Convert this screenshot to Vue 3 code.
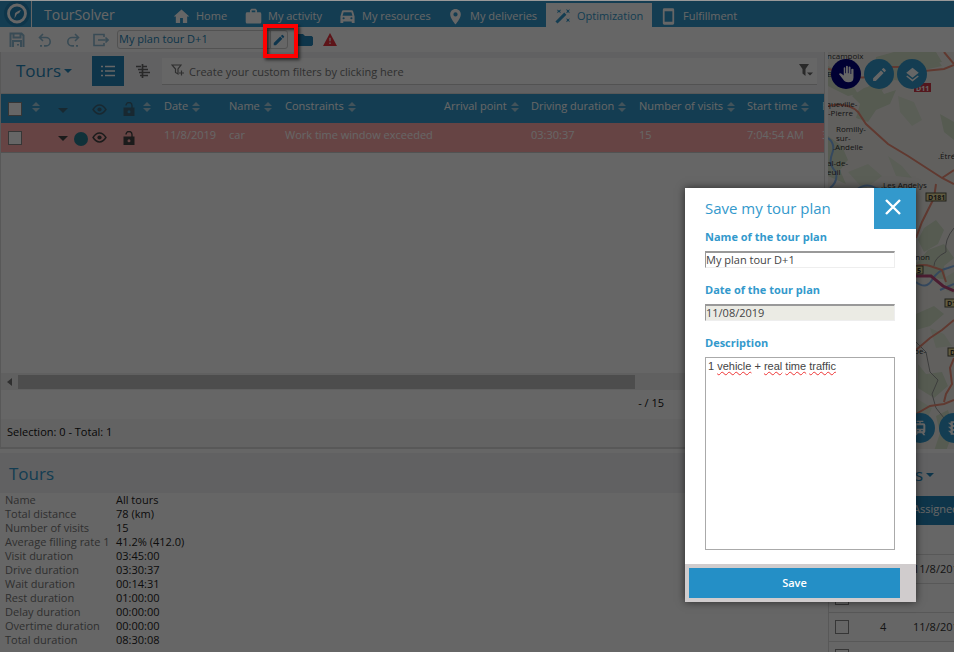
<script setup>
import { ref } from 'vue'

const planName = ref('My plan tour D+1')
const planDate = ref('11/08/2019')
const description = ref('1 vehicle + real time traffic')
const words = [
  { t: '1 ', bad: false },
  { t: 'vehicle', bad: true },
  { t: ' + ', bad: false },
  { t: 'real', bad: true },
  { t: ' ', bad: false },
  { t: 'time', bad: true },
  { t: ' ', bad: false },
  { t: 'traffic', bad: true },
]

const columns = ['Date', 'Name', 'Constraints', 'Arrival point', 'Driving duration', 'Number of visits', 'Start time', 'End time']
const cells = ['11/8/2019', 'car', 'Work time window exceeded', '', '03:30:37', '15', '7:04:54 AM', '3:35:02 PM']

const summary = [
  ['Name', 'All tours'],
  ['Total distance', '78 (km)'],
  ['Number of visits', '15'],
  ['Average filling rate 1', '41.2% (412.0)'],
  ['Visit duration', '03:45:00'],
  ['Drive duration', '03:30:37'],
  ['Wait duration', '00:14:31'],
  ['Rest duration', '01:00:00'],
  ['Delay duration', '00:00:00'],
  ['Overtime duration', '00:00:00'],
  ['Total duration', '08:30:08'],
]

const visits = [
  ['', ''],
  ['2', '11/8/2019'],
  ['', ''],
  ['4', '11/8/2019'],
  ['', ''],
]
</script>

<template>
  <div class="app">
    <header class="topbar">
      <a class="logo" href="#" aria-label="TourSolver home">
        <svg viewBox="0 0 28 26" width="28" height="26">
          <circle cx="14" cy="12.500" r="13" fill="#2585b8" />
          <circle cx="14" cy="12.500" r="8.500" fill="none" stroke="#fff" stroke-width="2.800" />
          <path d="M11.500 17.500 L12 12.500 Q13 10.500 18 9 Q17 12 14 13 Z" fill="#fff" />
        </svg>
      </a>
      <span class="brand">TourSolver</span>
      <nav class="nav">
        <a href="#" class="home"><svg viewBox="0 0 24 24" width="17" height="17"><path d="M10 21v-7h4v7h6v-9h3L12 2 1 12h3v9z" /></svg>Home</a>
        <a href="#" class="activity"><svg viewBox="0 0 24 24" width="17" height="17"><path fill-rule="evenodd" d="M22 6h-5V3l-2-2H9L7 3v3H2L1 8v12l1 2h20l1-2V8zM9.500 3.500h5V6h-5z" /></svg>My activity</a>
        <a href="#" class="resources"><svg viewBox="0 0 24 24" width="17" height="17"><path fill-rule="evenodd" d="M20 5q-.5-2-2-2H6Q4.500 3 4 5l-2 7v9h4v-2h12v2h4v-9zM6.500 16a1.500 1.500 0 1 1 0-3 1.500 1.500 0 0 1 0 3zm11 0a1.500 1.500 0 1 1 0-3 1.500 1.500 0 0 1 0 3zM5 11l1.500-5h11L19 11z" /></svg>My resources</a>
        <a href="#" class="deliveries"><svg viewBox="0 0 24 24" width="17" height="17"><path fill-rule="evenodd" d="M12 1.500C7.500 1.500 4.500 5 4.500 9c0 5.500 7.500 14 7.500 14s7.500-8.500 7.500-14c0-4-3-7.500-7.500-7.500zm0 10.500a3 3 0 1 1 0-6 3 3 0 0 1 0 6z" /></svg>My deliveries</a>
        <a href="#" class="active"><svg viewBox="0 0 24 24" width="17" height="17"><path d="M14.500 6.500l3 3L5 22l-3-3zM7 5.500L4 7.500l1.500-3L4 2l3 1.500L10 2 8.500 4.800 10 7.500zM20 16l2.500-1.500L21 17l1.500 3L20 18.500 17 20l1.500-3L17 14.500zM22.500 1.500L21 4.500l1.500 3-2.500-1.500-3 1.500 1.500-3-1.500-3L20 3z" /></svg>Optimization</a>
        <a href="#" class="fulfillment"><svg viewBox="0 0 24 24" width="17" height="17"><path fill-rule="evenodd" d="M6 .5h12q2 0 2 2v19q0 2-2 2H6q-2 0-2-2v-19q0-2 2-2zM6.500 4.500v15h11v-15z" /></svg>Fulfillment</a>
      </nav>
    </header>

    <div class="toolbar">
      <button type="button" class="tool" aria-label="Save"><svg viewBox="0 0 16 16" width="16" height="16"><path d="M1.500 15V1.500h11l2 2V15M4.500 1.500v4h7v-4M4 15V9h8v6M9 12v1.500" /></svg></button>
      <button type="button" class="tool" aria-label="Undo"><svg viewBox="0 0 16 16" width="16" height="16"><path d="M6 2L2.500 5.500 6 9M3 5.500h6a4.200 4.200 0 0 1 0 8.400H7M3 13.900h2" /></svg></button>
      <button type="button" class="tool" aria-label="Redo"><svg viewBox="0 0 16 16" width="16" height="16"><path d="M10 2l3.500 3.500L10 9M13 5.500H7a4.200 4.200 0 0 0 0 8.400h2M11 13.900h2" /></svg></button>
      <button type="button" class="tool" aria-label="Export"><svg viewBox="0 0 16 16" width="16" height="16"><path d="M11 5V2.500H1v11h10V11M5 8h10M12.500 5.500L15 8l-2.500 2.500" /></svg></button>
      <div class="plan-box">
        <input v-model="planName" class="plan" aria-label="Tour plan" />
        <button type="button" class="edit" aria-label="Edit tour plan">
          <svg viewBox="0 0 24 24" width="14" height="14"><path d="M3 17.200V21h3.800L17.800 9.900l-3.700-3.700zM20.700 7a1 1 0 0 0 0-1.400l-2.300-2.300a1 1 0 0 0-1.400 0l-1.800 1.800L18.900 8.900z" fill="#2585c0" /></svg>
        </button>
      </div>
      <button type="button" class="folder" aria-label="Open folder"><svg viewBox="0 0 24 20" width="16" height="14"><path d="M2 1h7l3 3h10l2 2v11l-2 2H2l-2-2V3z" fill="#2585b8" /></svg></button>
      <button type="button" class="warn" aria-label="Warnings"><svg viewBox="0 0 24 22" width="14" height="13"><path d="M12 0l12 22H0z" fill="#e8333e" /><path d="M11 8h2v6h-2zM11 16h2v2.500h-2z" fill="#fff" /></svg></button>
    </div>

    <main class="main">
      <section class="tours">
        <div class="pane-head">
          <button type="button" class="title">Tours<i class="caret"></i></button>
          <button type="button" class="view on" aria-label="List view"><svg viewBox="0 0 14 12" width="14" height="12"><path d="M4 1.500h10M4 6h10M4 10.500h10M0 1.500h2M0 6h2M0 10.500h2" stroke="#fff" stroke-width="1.400" /></svg></button>
          <button type="button" class="view" aria-label="Timeline view"><svg viewBox="0 0 14 14" width="14" height="14"><path d="M0 2.500h5M7 2.500h4M2 5.500h4M7 5.500h5M3 8.500h3M7 8.500h7M4 11.500h8M6.500 0v14" stroke="#666" stroke-width="1.700" /></svg></button>
          <div class="filter">
            <svg viewBox="0 0 14 13" width="14" height="13" fill="none" stroke="#777" stroke-width="1.200"><path d="M1 1h9L7 5v5L4.500 8.500V5zM10.500 6.500v5M8 9h5" /></svg>
            <input aria-label="Filters" placeholder="Create your custom filters by clicking here" />
            <button type="button" class="funnel" aria-label="Filter menu"><svg viewBox="0 0 14 13" width="14" height="13"><path d="M0 0h10L6.500 5v7L3.500 9.500V5zM8 8.500h6l-3 3z" fill="#666" /></svg></button>
          </div>
        </div>
        <div class="table-wrap">
          <table class="grid">
            <thead>
              <tr>
                <th class="w-check"><input type="checkbox" aria-label="Select all tours" /></th>
                <th class="w-sort"><i class="sort"></i></th>
                <th class="w-caret"><i class="down"></i></th>
                <th class="w-dot"></th>
                <th class="w-eye"><svg viewBox="0 0 16 12" width="15" height="11"><path d="M1 6Q4 1.200 8 1.200T15 6Q12 10.800 8 10.800T1 6z" fill="none" stroke="#444" stroke-width="1.600" /><circle cx="8" cy="6" r="2.300" fill="#444" /></svg></th>
                <th class="w-lock"><svg viewBox="0 0 12 14" width="12" height="14"><path fill-rule="evenodd" d="M.5 5.500h11V14H.5zM6 8.300a1.500 1.500 0 1 0 0 3 1.500 1.500 0 0 0 0-3z" fill="#444" /><path d="M3 3.500a3 3 0 0 1 6 0V6" fill="none" stroke="#444" stroke-width="1.400" /></svg></th>
                <th class="w-sort2"><i class="sort"></i></th>
                <th v-for="(c, i) in columns" :key="c" :class="'c' + i">{{ c }}<i class="sort after"></i></th>
              </tr>
            </thead>
            <tbody>
              <tr>
                <td><input type="checkbox" aria-label="Select tour" /></td>
                <td></td>
                <td><i class="down"></i></td>
                <td><i class="dot"></i></td>
                <td><svg viewBox="0 0 16 12" width="15" height="11"><path d="M1 6Q4 1.200 8 1.200T15 6Q12 10.800 8 10.800T1 6z" fill="none" stroke="#444" stroke-width="1.600" /><circle cx="8" cy="6" r="2.300" fill="#444" /></svg></td>
                <td><svg viewBox="0 0 12 14" width="12" height="14"><path fill-rule="evenodd" d="M.5 5.500h11V14H.5zM6 8.300a1.500 1.500 0 1 0 0 3 1.500 1.500 0 0 0 0-3z" fill="#444" /><path d="M3 3.500a3 3 0 0 1 6 0V6" fill="none" stroke="#444" stroke-width="1.400" /></svg></td>
                <td></td>
                <td v-for="(c, i) in cells" :key="i">{{ c }}</td>
              </tr>
            </tbody>
          </table>
        </div>
        <div class="scroll"><i class="left"></i><div class="thumb"></div></div>
        <div class="pager">- / 15</div>
        <div class="status">Selection: 0 - Total: 1</div>
      </section>

      <section class="map">
        <svg class="canvas" viewBox="0 0 126 399" preserveAspectRatio="xMinYMin slice">
          <rect width="126" height="399" fill="#f3f1ec" />
          <g fill="#d6e3ca">
            <path d="M48 5l18-5h38l10 14-18 4-12 12-18-2-14 12-12-4 6-14z" />
            <path d="M36 36l14-4 6 10 12-4-6 14-14 6-8 12-12-4 4-14-8-8z" />
            <path d="M0 14l18 8 12 20-10 2-20-10zM0 84l14 10 6 14-8 10 6 14-18-8z" />
            <path d="M88 0h20l6 10-14 2zM112 62l14 8v18l-10-8zM96 176l12-8 8 10-6 14-14 8-6-12z" />
            <path d="M100 198l16-6 10 14-10 8 2 14-20-4-10-12zM88 262l18-8 10 8-14 12-14 4zM90 312l8 10 16-2 6 14-14 12-16-10z" />
            <path d="M108 364l12-6 6 20-8 21h-12l6-18z" />
          </g>
          <g fill="#e2ead8">
            <path d="M70 44l16 6 8 18-10 6-12-14zM20 120l20-8 14 12-18 14zM60 104l14 10 10 12-16-2z" />
            <path d="M116 226l10-6v22l-8-4zM88 346l16 10-6 14-10-6zM102 276l14 6 8 12-16 2z" />
          </g>
          <g fill="none" stroke="#85b5ea" stroke-width="2">
            <path d="M0 86q8 6 4 16t4 18q2 10-6 16M28 138q10-8 20-2l14 4" />
            <path d="M88 230q10 8 16-2t16-12l6-2M112 238l14-6" />
          </g>
          <g fill="none" stroke="#999" stroke-width="1"><path d="M126 176q-10 12-8 24-12 6-12 14M88 290l10 10 4 20 8 8-6 14 4 14 8 10-2 12 8 8" /></g>
          <g fill="none" stroke="#ef8e78" stroke-width="2">
            <path d="M0 17l20 4q14 8 24 2l14-8h24l14 4 20-2 10-4M116 0l10 12M0 54q20-4 30 6l8 12 22 20 20 12 34 22 12 6M114 126l12-8M108 132l-2 14-12 24-6 16" />
            <path d="M88 214q8-2 14 0l12 4 4 12M88 298l14-12 12-8 12-10M88 362l14-8 14-2 10-4M116 350l2-8 6-10-2-16 4-10" />
          </g>
          <path d="M88 224h15l12 10 11 5" fill="none" stroke="#bc4a7b" stroke-width="3" />
          <rect x="86" y="31" width="17" height="9" fill="#d33b4a" />
          <text x="88" y="39" class="road red">D11</text>
          <g class="plates"><rect x="98" y="141" width="20" height="8" /><rect x="86" y="214" width="9" height="8" /><rect x="117" y="247" width="18" height="8" /><rect x="120" y="296" width="18" height="8" /></g>
          <g class="road"><text x="100" y="148">D181</text><text x="89" y="221">5</text><text x="119" y="254">D181</text><text x="122" y="303">D1</text></g>
          <g class="place">
            <text x="-1" y="7">ncampoix</text><text x="-1" y="25">Bois</text>
            <text x="-2" y="55">queville-</text><text x="0" y="64">-Pierre</text>
            <text x="8" y="80">Romilly-</text><text x="8" y="89">sur-</text><text x="5" y="98">.Andelle</text>
            <text x="-1" y="114">al-de-</text><text x="-1" y="123">euil</text>
            <text x="110" y="107">.Étrépagny</text><text x="53" y="136">.Les Andelys</text>
            <text x="84" y="208">rnon</text><text x="86" y="302">pe-</text>
          </g>
        </svg>
        <div class="map-tools">
          <button type="button" class="round pan" aria-label="Pan"><svg viewBox="0 0 24 24" width="18" height="18"><path d="M22 6v10.500q0 6.500-7 6.500-5 0-7-4L2.500 12q2-2 4 0L9 14V4q0-1 1-1t1 1v7h1V2q0-1 1.200-1T14.500 2v9h1V3q0-1 1.200-1T18 3v9h1V6q0-1 1.500-1T22 6z" fill="#fff" /></svg></button>
          <button type="button" class="round" aria-label="Draw"><svg viewBox="0 0 24 24" width="17" height="17"><path d="M3 17.200V21h3.800L17.800 9.900l-3.700-3.700zM20.700 7a1 1 0 0 0 0-1.400l-2.300-2.300a1 1 0 0 0-1.400 0l-1.800 1.800L18.900 8.900z" fill="#fff" /></svg></button>
          <button type="button" class="round" aria-label="Layers"><svg viewBox="0 0 24 24" width="15" height="15"><path d="M12 1l10 8-10 8L2 9zM3.500 13.500l8.500 6.500 8.500-6.500L22 15l-10 8L2 15z" fill="#fff" /></svg></button>
        </div>
        <div class="map-tools low">
          <button type="button" class="round" aria-label="Transit"><svg viewBox="0 0 24 24" width="16" height="16"><path fill-rule="evenodd" d="M7 1h10v2h-4v2h4q3 0 3 3v9q0 2-2 3l2 3h-3l-2-3H9l-2 3H4l2-3q-2-1-2-3V8q0-3 3-3h4V3H7zM7 8v5h10V8zM8 15v2h2v-2zM14 15v2h2v-2z" fill="#fff" /></svg></button>
          <button type="button" class="round" aria-label="Traffic"><svg viewBox="0 0 24 24" width="16" height="16"><path fill-rule="evenodd" d="M7 2h10v2h4l-4 4v2h4l-4 4v2h4l-4 4v2H7v-2l-4-4h4v-2l-4-4h4V8L3 4h4zM12 4a2 2 0 1 0 0 4 2 2 0 0 0 0-4zM12 10a2 2 0 1 0 0 4 2 2 0 0 0 0-4zM12 16a2 2 0 1 0 0 4 2 2 0 0 0 0-4z" fill="#fff" /></svg></button>
        </div>
      </section>

      <section class="details">
        <h2>Tours</h2>
        <dl>
          <template v-for="[k, v] in summary" :key="k"><dt>{{ k }}</dt><dd>{{ v }}</dd></template>
        </dl>
      </section>

      <section class="visits">
        <button type="button" class="title">Visits<i class="caret"></i></button>
        <table>
          <thead><tr><th class="v0"></th><th class="v1"></th><th class="v2">Assigned</th></tr></thead>
          <tbody>
            <tr v-for="(v, i) in visits" :key="i">
              <td><input type="checkbox" aria-label="Select visit" /></td><td>{{ v[0] }}</td><td>{{ v[1] }}</td>
            </tr>
          </tbody>
        </table>
      </section>
    </main>

    <div class="shade"></div>
    <div class="highlight"></div>

    <form class="modal" role="dialog" aria-labelledby="dlg-title" @submit.prevent>
      <div class="modal-head">
        <h1 id="dlg-title">Save my tour plan</h1>
        <button type="button" class="close" aria-label="Close"><svg viewBox="0 0 16 16" width="16" height="16"><path d="M1 1l14 14M15 1L1 15" stroke="#fff" stroke-width="2.400" /></svg></button>
      </div>
      <div class="fields">
        <label for="plan-name">Name of the tour plan</label>
        <input id="plan-name" v-model="planName" type="text" />
        <label for="plan-date">Date of the tour plan</label>
        <input id="plan-date" v-model="planDate" type="text" readonly />
        <label for="plan-desc">Description</label>
        <div class="area">
          <textarea id="plan-desc" v-model="description" spellcheck="false"></textarea>
          <div class="marks" aria-hidden="true"><span v-for="(w, i) in words" :key="i" :class="{ bad: w.bad }">{{ w.t }}</span></div>
        </div>
      </div>
      <div class="modal-foot"><button type="submit">Save</button></div>
    </form>
  </div>
</template>

<style>
body { overflow: hidden; }
</style>

<style scoped>
* { box-sizing: border-box; }
.app {
  position: relative;
  height: 100vh;
  display: flex;
  flex-direction: column;
  background: #fff;
  border-top: 1px solid #999;
  font: 11px/14px "Open Sans", "Noto Sans", sans-serif;
  color: #333;
}
button, input, textarea { font: inherit; color: inherit; margin: 0; padding: 0; border: 0; border-radius: 0; background: none; }
button { display: flex; align-items: center; justify-content: center; }
svg { display: block; flex: none; }

.topbar { display: flex; flex: none; height: 26px; background: #3399cc; color: #fff; overflow: hidden; }
.logo { width: 32px; padding-left: 3px; background: #3399cc; border-right: 1px solid #fff; }
.brand { width: 131px; padding-left: 12px; font-size: 14px; line-height: 28px; }
.nav { display: flex; }
.nav a { display: flex; align-items: center; gap: 6px; padding: 4px 10px 0; color: #fff; text-decoration: none; white-space: nowrap; }
.nav svg { fill: #fff; }
.nav .home { width: 72px; }
.nav .activity { width: 94px; }
.nav .resources { width: 108px; }
.nav .deliveries { width: 109px; }
.nav a.active { width: 106px; margin-top: 2px; padding: 2px 8px 0; background: #fff; color: #3399cc; }
.nav a.active svg { fill: #3399cc; }
.nav .fulfillment { padding-left: 8px; }

.toolbar { display: flex; flex: none; align-items: center; height: 25px; padding-left: 9px; }
.tool { width: 28px; height: 20px; justify-content: flex-start; }
.tool svg { fill: none; stroke: #8fbcd4; stroke-width: 1.6; }
.tool:nth-child(1) svg { stroke-width: 2; }
.plan-box { display: flex; flex: none; width: 171px; height: 19px; margin-left: -4px; border: 1px solid #ccc; border-radius: 3px; }
.plan { flex: 1; min-width: 0; padding: 0 1px 2px; color: #2585b8; outline: 0; }
.edit { width: 17px; border-left: 1px solid #ccc; }
.folder { margin-left: 9px; }
.warn { margin-left: 10px; }

.main { display: grid; flex: 1; min-height: 0; grid-template-columns: minmax(0, 1fr) 126px; grid-template-rows: 2fr 1fr; gap: 4px 3px; }
.main > section { min-width: 0; min-height: 0; overflow: hidden; }

.tours { display: flex; flex-direction: column; border: solid #ddd; border-width: 0 1px 2px; background: #fff; }
.pane-head { display: flex; flex: none; align-items: center; height: 42px; padding: 0 7px 3px 15px; background: #f2f2f6; border-bottom: 1px solid #ddd; }
.title { font-size: 17px; line-height: 24px; color: #2585b8; }
.caret { width: 0; height: 0; margin-left: 3px; border: 4px solid transparent; border-top-color: #2585b8; border-bottom: 0; }
.pane-head .title { width: 76px; justify-content: flex-start; }
.view { width: 38px; height: 30px; }
.view.on { width: 32px; background: #2585b8; }
.filter { display: flex; flex: 1; align-items: center; gap: 4px; height: 27px; padding: 0 4px 0 9px; background: #fff; border-bottom: 1px solid #ccc; }
.filter input { flex: 1; min-width: 0; padding-top: 2px; outline: 0; }
.filter input::placeholder { color: #777; opacity: 1; }

.table-wrap { flex: 1; min-height: 0; overflow: hidden; }
table { border-collapse: collapse; table-layout: fixed; }
.grid { width: 900px; }
.grid th, .grid td { height: 29px; padding: 0 0 5px 3px; font-weight: 400; text-align: left; white-space: nowrap; vertical-align: middle; color: #fff; overflow: hidden; }
.grid thead { background: #3399cc; }
.grid thead svg, .grid thead .down { opacity: 0.6; }
.grid tbody { background: #ffaaaa; border-bottom: 1px solid #ccc; }
.grid th svg, .grid td svg { position: relative; top: 3px; }
input[type="checkbox"] { display: block; appearance: none; width: 14px; height: 14px; border: 1px solid #888; background: #fff; }
.grid input[type="checkbox"] { position: relative; top: 3px; left: 4px; }
.w-check { width: 28px; }
.w-sort { width: 26px; }
.w-caret { width: 16px; }
.w-dot { width: 18px; }
.w-eye { width: 31px; }
.w-lock { width: 20px; }
.w-sort2 { width: 21px; }
.c0 { width: 65px; }
.c1 { width: 56px; }
.c2 { width: 159px; }
.c3 { width: 87px; }
.c4 { width: 108px; }
.c5 { width: 108px; }
.c6 { width: 75px; }
.sort { display: inline-flex; flex-direction: column; gap: 2px; vertical-align: middle; }
.sort::before, .sort::after { content: ""; border: 4px solid transparent; }
.sort::before { border-top: 0; border-bottom-color: #a8cfe2; }
.sort::after { border-bottom: 0; border-top-color: #a8cfe2; }
.sort.after { margin-left: 4px; }
.down { display: block; position: relative; top: 4px; border: 5px solid transparent; border-top-color: #444; border-bottom: 0; width: 0; }
.dot { display: block; position: relative; top: 4px; width: 14px; height: 14px; border-radius: 50%; background: #2a7a90; }
.scroll { display: flex; flex: none; align-items: center; height: 17px; background: #f1f1f1; }
.left { width: 0; margin: 0 6px; border: 4px solid transparent; border-right: 5px solid #777; border-left: 0; }
.thumb { width: 75%; height: 14px; background: #c1c1c1; }
.pager { flex: none; height: 29px; padding: 6px 160px 0 0; text-align: right; }
.status { flex: none; height: 28px; padding: 6px; background: #f8f8f8; }
.pager, .status { color: #111; }

.map { position: relative; }
.canvas { width: 100%; height: 100%; }
.place { font-size: 8px; fill: #333; }
.road { font-size: 7px; font-weight: 700; fill: #333; }
.road.red { fill: #fff; }
.plates { fill: #f2e3a0; stroke: #554; }
.map-tools { position: absolute; top: 7px; left: 3px; display: flex; gap: 3px; }
.map-tools.low { top: auto; bottom: 6px; left: 77px; gap: 4px; }
.round { flex: none; width: 30px; height: 30px; border-radius: 50%; background: #3399cc; }
.round.pan { background: #000080; }

.details h2 { margin: 0; height: 40px; padding-left: 9px; background: #f2f2f6; font-size: 17px; font-weight: 400; line-height: 42px; color: #3399cc; }
.details dl { display: grid; grid-template-columns: 111px 1fr; margin: 0; padding-left: 5px; line-height: 14px; }
.details dt { color: #777; white-space: nowrap; }
.details dd { margin: 0; color: #222; }

.visits { border-left: 1px solid #ddd; }
.visits .title { width: 100%; height: 43px; padding-right: 20px; justify-content: flex-end; background: #f2f2f6; }
.visits table { width: 180px; }
.visits th { height: 29px; padding: 0 0 4px; background: #2585b8; color: #fff; font-weight: 400; text-align: left; }
.visits td { height: 29px; padding: 0; border-bottom: 1px solid #ddd; }
.visits td:first-child { padding-left: 6px; }
.visits .v0 { width: 50px; }
.visits .v1 { width: 34px; }
.visits td:nth-child(2) { padding-left: 1px; }

.shade { position: absolute; inset: 0; background: rgba(0, 0, 0, 0.6); }
.highlight { position: absolute; top: 23px; left: 263px; width: 35px; height: 34px; border: 4px solid #f00; box-shadow: 2px 2px 3px rgba(0, 0, 0, 0.6), inset 2px 2px 3px rgba(0, 0, 0, 0.6); }

.modal { position: absolute; top: 187px; right: 38px; width: 231px; background: #fff; box-shadow: 0 0 8px rgba(0, 0, 0, 0.6); }
.modal-head { display: flex; align-items: flex-start; justify-content: space-between; height: 40px; padding-left: 20px; }
.modal-head h1 { margin: 0; font-size: 15px; font-weight: 400; line-height: 40px; color: #3399cc; }
.close { width: 42px; height: 41px; padding: 0 4px 3px 0; background: #3399cc; }
.fields { display: flex; flex-direction: column; padding: 1px 21px 14px 20px; }
.fields label { margin-bottom: 7px; font-weight: 700; line-height: 15px; color: #3399cc; }
.fields input { height: 17px; margin-bottom: 14px; padding-bottom: 1px; border: 1px solid #eee; border-top: 2px solid #999; border-left-color: #999; color: #444; outline: 0; }
.fields input[readonly] { background: #ebebe4; }
.area { position: relative; }
textarea, .marks { display: block; width: 100%; height: 193px; padding: 1px 2px; border: 1px solid #aaa; font: 11px/14px "Liberation Sans", Arial, sans-serif; color: #444; resize: none; outline: 0; }
.marks { position: absolute; inset: 0; border-color: transparent; color: transparent; pointer-events: none; white-space: pre-wrap; }
.bad { text-decoration: underline wavy #e33 1px; text-underline-offset: 1px; text-decoration-skip-ink: none; }
.modal-foot { padding: 4px 16px 4px 4px; background: #d0cccd; }
.modal-foot button { width: 100%; height: 30px; background: #248fc6; color: #fff; font-weight: 600; }
</style>
